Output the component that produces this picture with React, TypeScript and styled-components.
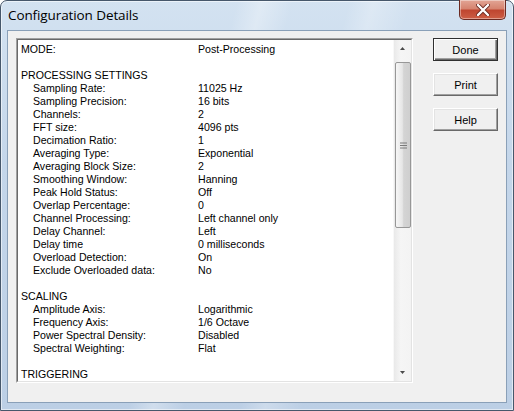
import React from "react";
import styled, { createGlobalStyle } from "styled-components";

const GlobalStyle = createGlobalStyle`
  html, body {
    margin: 0;
    padding: 0;
    background: #ffffff;
  }
`;

type Entry =
  | { kind: "row"; label: string; value: string; indent?: boolean }
  | { kind: "head"; label: string }
  | { kind: "blank" };

const entries: Entry[] = [
  { kind: "row", label: "MODE:", value: "Post-Processing" },
  { kind: "blank" },
  { kind: "head", label: "PROCESSING SETTINGS" },
  { kind: "row", indent: true, label: "Sampling Rate:", value: "11025 Hz" },
  { kind: "row", indent: true, label: "Sampling Precision:", value: "16 bits" },
  { kind: "row", indent: true, label: "Channels:", value: "2" },
  { kind: "row", indent: true, label: "FFT size:", value: "4096 pts" },
  { kind: "row", indent: true, label: "Decimation Ratio:", value: "1" },
  { kind: "row", indent: true, label: "Averaging Type:", value: "Exponential" },
  { kind: "row", indent: true, label: "Averaging Block Size:", value: "2" },
  { kind: "row", indent: true, label: "Smoothing Window:", value: "Hanning" },
  { kind: "row", indent: true, label: "Peak Hold Status:", value: "Off" },
  { kind: "row", indent: true, label: "Overlap Percentage:", value: "0" },
  { kind: "row", indent: true, label: "Channel Processing:", value: "Left channel only" },
  { kind: "row", indent: true, label: "Delay Channel:", value: "Left" },
  { kind: "row", indent: true, label: "Delay time", value: "0 milliseconds" },
  { kind: "row", indent: true, label: "Overload Detection:", value: "On" },
  { kind: "row", indent: true, label: "Exclude Overloaded data:", value: "No" },
  { kind: "blank" },
  { kind: "head", label: "SCALING" },
  { kind: "row", indent: true, label: "Amplitude Axis:", value: "Logarithmic" },
  { kind: "row", indent: true, label: "Frequency Axis:", value: "1/6 Octave" },
  { kind: "row", indent: true, label: "Power Spectral Density:", value: "Disabled" },
  { kind: "row", indent: true, label: "Spectral Weighting:", value: "Flat" },
  { kind: "blank" },
  { kind: "head", label: "TRIGGERING" },
];

const Window = styled.div`
  box-sizing: border-box;
  width: 514px;
  height: 411px;
  border: 1px solid #46576b;
  border-radius: 7px 7px 0 0;
  background:
    linear-gradient(105deg, transparent 0%, transparent 38%, rgba(255,255,255,0.3) 42%, transparent 47%, transparent 56%, rgba(255,255,255,0.25) 60%, transparent 66%),
    linear-gradient(180deg, #d3e2f1 0%, #c4d6ea 40%, #bccfe5 100%);
  box-shadow: inset 0 0 0 1px rgba(255, 255, 255, 0.55);
  display: flex;
  flex-direction: column;
  font-family: "Liberation Sans", Arial, sans-serif;
`;

const TitleBar = styled.div`
  height: 29px;
  display: flex;
  align-items: flex-start;
`;

const Title = styled.div`
  font-family: "Open Sans", "Noto Sans", sans-serif;
  font-size: 13.5px;
  color: #000;
  padding: 5px 0 0 7px;
  letter-spacing: -0.1px;
`;

const CloseButton = styled.div`
  margin-left: auto;
  margin-right: 7px;
  margin-top: -1px;
  width: 47px;
  height: 20px;
  box-sizing: border-box;
  border: 1px solid #6b2a22;
  border-top: none;
  border-radius: 0 0 5px 5px;
  background: linear-gradient(180deg, #e2a595 0%, #d68470 45%, #bf4630 55%, #cd5e45 100%);
  box-shadow: inset 0 0 0 1px rgba(255, 255, 255, 0.4);
  display: flex;
  align-items: center;
  justify-content: center;
`;

const Client = styled.div`
  flex: 1;
  margin: 0 6px 7px 6px;
  border: 1px solid #8aa0b8;
  background: #f0f0f0;
  display: flex;
  align-items: flex-start;
  padding: 7px 7px 0 8px;
`;

const ListBox = styled.div`
  box-sizing: border-box;
  width: 397px;
  height: 345px;
  border-style: solid;
  border-width: 1px;
  border-color: #a0a0a0 #ffffff #ffffff #a0a0a0;
  display: flex;
  background: #ffffff;
`;

const ListInner = styled.div`
  flex: 1;
  display: flex;
  border-style: solid;
  border-width: 1px;
  border-color: #696969 #e3e3e3 #e3e3e3 #696969;
  overflow: hidden;
`;

const Content = styled.div`
  flex: 1;
  padding: 3px 0 0 3px;
  font-size: 10.6px;
  color: #000;
`;

const Row = styled.div<{ $indent?: boolean }>`
  display: flex;
  height: 13px;
  line-height: 13px;
  white-space: nowrap;
  padding-left: ${({ $indent }) => ($indent ? "12px" : "0")};
`;

const Label = styled.span<{ $indent?: boolean }>`
  width: ${({ $indent }) => ($indent ? "165px" : "177px")};
  flex-shrink: 0;
`;

const Value = styled.span``;

const ScrollBar = styled.div`
  width: 17px;
  display: flex;
  flex-direction: column;
  background: linear-gradient(90deg, #e9e9e9 0%, #f5f5f5 40%, #f3f3f3 100%);
  border-left: 1px solid #f8f8f8;
`;

const ArrowButton = styled.div`
  height: 17px;
  display: flex;
  align-items: center;
  justify-content: center;
`;

const Track = styled.div`
  flex: 1;
  display: flex;
  flex-direction: column;
  padding-top: 5px;
`;

const Thumb = styled.div`
  box-sizing: border-box;
  height: 166px;
  margin: 0 0 0 1px;
  border: 1px solid #979797;
  border-radius: 2px;
  background: linear-gradient(90deg, #f6f6f6 0%, #e6e6e6 45%, #d4d4d4 55%, #cfcfcf 100%);
  display: flex;
  align-items: center;
  justify-content: center;
`;

const Buttons = styled.div`
  display: flex;
  flex-direction: column;
  gap: 12px;
  margin-left: 20px;
`;

const Button = styled.div<{ $default?: boolean }>`
  box-sizing: border-box;
  width: 65px;
  height: 23px;
  background: #f0f0f0;
  border: 1px solid;
  border-color: ${({ $default }) =>
    $default ? "#303030" : "#ffffff #696969 #696969 #ffffff"};
  box-shadow: ${({ $default }) =>
    $default
      ? "inset 1px 1px 0 #ffffff, inset -1px -1px 0 #696969, inset -2px -2px 0 #a0a0a0"
      : "inset -1px -1px 0 #a0a0a0, inset 1px 1px 0 #e3e3e3"};
  display: flex;
  align-items: center;
  justify-content: center;
  font-size: 11px;
  color: #000;
`;

export default function App() {
  return (
    <>
      <GlobalStyle />
      <Window>
        <TitleBar>
          <Title>Configuration Details</Title>
          <CloseButton>
            <svg width="14" height="12" viewBox="0 0 14 12">
              <path
                d="M2 1 L12 11 M12 1 L2 11"
                stroke="#6a2a22"
                strokeWidth="4"
                strokeLinecap="round"
              />
              <path
                d="M2 1 L12 11 M12 1 L2 11"
                stroke="#ffffff"
                strokeWidth="2.4"
                strokeLinecap="round"
              />
            </svg>
          </CloseButton>
        </TitleBar>
        <Client>
          <ListBox>
            <ListInner>
              <Content>
                {entries.map((e, i) =>
                  e.kind === "blank" ? (
                    <Row key={i} />
                  ) : e.kind === "head" ? (
                    <Row key={i}>{e.label}</Row>
                  ) : (
                    <Row key={i} $indent={e.indent}>
                      <Label $indent={e.indent}>{e.label}</Label>
                      <Value>{e.value}</Value>
                    </Row>
                  )
                )}
              </Content>
              <ScrollBar>
                <ArrowButton>
                  <svg width="5" height="3" viewBox="0 0 5 3">
                    <path d="M2.5 0 L5 3 L0 3 Z" fill="#4a4a4a" />
                  </svg>
                </ArrowButton>
                <Track>
                  <Thumb>
                    <svg width="7" height="7" viewBox="0 0 7 7">
                      <path d="M0 1 H7 M0 3.5 H7 M0 6 H7" stroke="#7a7a7a" strokeWidth="1" />
                    </svg>
                  </Thumb>
                </Track>
                <ArrowButton>
                  <svg width="5" height="3" viewBox="0 0 5 3">
                    <path d="M0 0 L5 0 L2.5 3 Z" fill="#4a4a4a" />
                  </svg>
                </ArrowButton>
              </ScrollBar>
            </ListInner>
          </ListBox>
          <Buttons>
            <Button $default>Done</Button>
            <Button>Print</Button>
            <Button>Help</Button>
          </Buttons>
        </Client>
      </Window>
    </>
  );
}
